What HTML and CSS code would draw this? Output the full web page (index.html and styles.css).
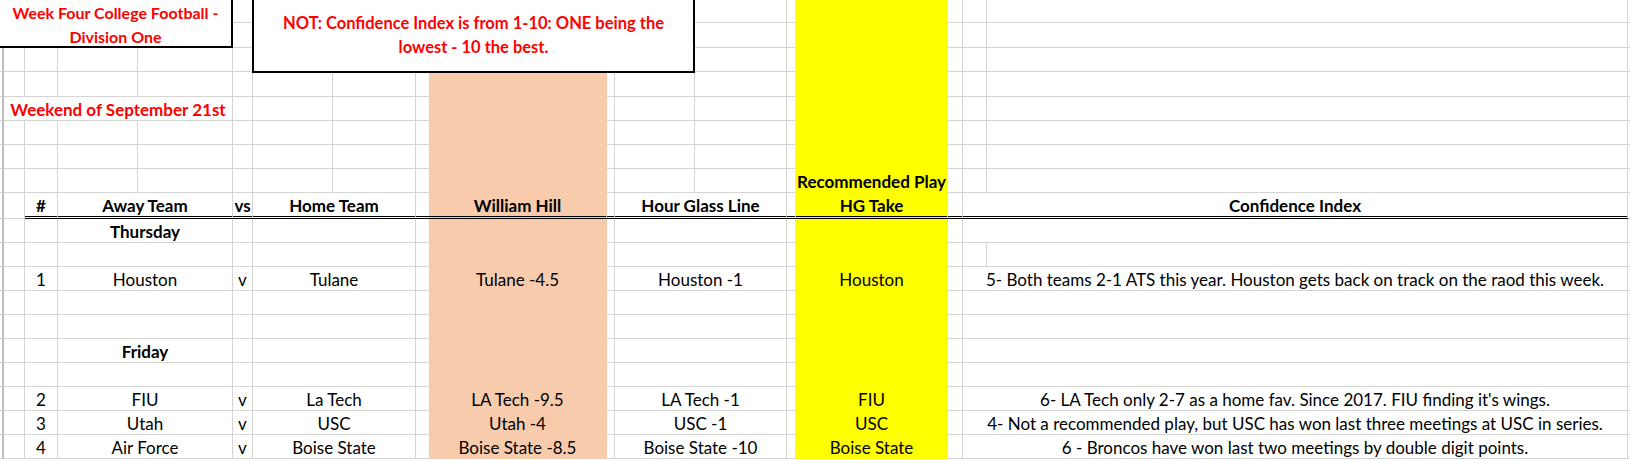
FILE: index.html
```html
<!DOCTYPE html>
<html>
<head>
<meta charset="utf-8">
<link rel="stylesheet" href="styles.css">
</head>
<body>
<div class="sheet">
  <div class="row h23"><div class="c st"></div><div class="c"></div><div class="c"></div><div class="c"></div><div class="c"></div><div class="c"></div><div class="c"></div><div class="c"></div><div class="c nr"></div><div class="c pe"></div><div class="c"></div><div class="c"></div><div class="c"></div><div class="c my"></div><div class="c ye"></div><div class="c"></div><div class="c"></div><div class="c"></div><div class="c nr"></div></div>
  <div class="row h25"><div class="c st"></div><div class="c"></div><div class="c"></div><div class="c"></div><div class="c"></div><div class="c"></div><div class="c"></div><div class="c"></div><div class="c nr"></div><div class="c pe"></div><div class="c"></div><div class="c"></div><div class="c"></div><div class="c my"></div><div class="c ye"></div><div class="c"></div><div class="c"></div><div class="c"></div><div class="c nr"></div></div>
  <div class="row h24"><div class="c st"></div><div class="c"></div><div class="c"></div><div class="c"></div><div class="c"></div><div class="c"></div><div class="c"></div><div class="c"></div><div class="c nr"></div><div class="c pe"></div><div class="c"></div><div class="c"></div><div class="c"></div><div class="c my"></div><div class="c ye"></div><div class="c"></div><div class="c"></div><div class="c"></div><div class="c nr"></div></div>
  <div class="row h25"><div class="c st"></div><div class="c"></div><div class="c"></div><div class="c"></div><div class="c"></div><div class="c"></div><div class="c"></div><div class="c"></div><div class="c nr"></div><div class="c pe"></div><div class="c"></div><div class="c"></div><div class="c"></div><div class="c my"></div><div class="c ye"></div><div class="c"></div><div class="c"></div><div class="c"></div><div class="c nr"></div></div>
  <div class="row h24"><div class="c st"></div><div class="c s4 b red">Weekend of September 21st</div><div class="c"></div><div class="c"></div><div class="c"></div><div class="c nr"></div><div class="c pe"></div><div class="c"></div><div class="c"></div><div class="c"></div><div class="c my"></div><div class="c ye"></div><div class="c"></div><div class="c"></div><div class="c"></div><div class="c nr"></div></div>
  <div class="row h24"><div class="c st"></div><div class="c"></div><div class="c"></div><div class="c"></div><div class="c"></div><div class="c"></div><div class="c"></div><div class="c"></div><div class="c nr"></div><div class="c pe"></div><div class="c"></div><div class="c"></div><div class="c"></div><div class="c my"></div><div class="c ye"></div><div class="c"></div><div class="c"></div><div class="c"></div><div class="c nr"></div></div>
  <div class="row h24"><div class="c st"></div><div class="c"></div><div class="c"></div><div class="c"></div><div class="c"></div><div class="c"></div><div class="c"></div><div class="c"></div><div class="c nr"></div><div class="c pe"></div><div class="c"></div><div class="c"></div><div class="c"></div><div class="c my"></div><div class="c ye"></div><div class="c"></div><div class="c"></div><div class="c"></div><div class="c nr"></div></div>
  <div class="row h24"><div class="c st"></div><div class="c"></div><div class="c"></div><div class="c"></div><div class="c"></div><div class="c"></div><div class="c"></div><div class="c"></div><div class="c nr"></div><div class="c pe"></div><div class="c"></div><div class="c"></div><div class="c"></div><div class="c my"></div><div class="c ye b">Recommended Play</div><div class="c"></div><div class="c"></div><div class="c"></div><div class="c nr"></div></div>
  <div class="row h26 hdr"><div class="c st"></div><div class="c"></div><div class="c d b">#</div><div class="c d s2 b">Away Team</div><div class="c d b">vs</div><div class="c d s2 b">Home Team</div><div class="c d nr"></div><div class="c d pe b">William Hill</div><div class="c d"></div><div class="c d s2 b">Hour Glass Line</div><div class="c d my"></div><div class="c d ye b">HG Take</div><div class="c d"></div><div class="c d s2 b">Confidence Index</div><div class="c nr"></div></div>
  <div class="row h24"><div class="c st"></div><div class="c"></div><div class="c"></div><div class="c s2 b">Thursday</div><div class="c"></div><div class="c s2"></div><div class="c nr"></div><div class="c pe"></div><div class="c"></div><div class="c s2"></div><div class="c my"></div><div class="c ye"></div><div class="c"></div><div class="c s2"></div><div class="c nr"></div></div>
  <div class="row h24"><div class="c st"></div><div class="c"></div><div class="c"></div><div class="c s2"></div><div class="c"></div><div class="c s2"></div><div class="c nr"></div><div class="c pe"></div><div class="c"></div><div class="c s2"></div><div class="c my"></div><div class="c ye"></div><div class="c"></div><div class="c"></div><div class="c"></div><div class="c nr"></div></div>
  <div class="row h24"><div class="c st"></div><div class="c"></div><div class="c">1</div><div class="c s2">Houston</div><div class="c">v</div><div class="c s2">Tulane</div><div class="c nr"></div><div class="c pe">Tulane -4.5</div><div class="c"></div><div class="c s2">Houston -1</div><div class="c my"></div><div class="c ye">Houston</div><div class="c"></div><div class="c s2">5- Both teams 2-1 ATS this year. Houston gets back on track on the raod this week.</div><div class="c nr"></div></div>
  <div class="row h24"><div class="c st"></div><div class="c"></div><div class="c"></div><div class="c s2"></div><div class="c"></div><div class="c s2"></div><div class="c nr"></div><div class="c pe"></div><div class="c"></div><div class="c s2"></div><div class="c my"></div><div class="c ye"></div><div class="c"></div><div class="c s2"></div><div class="c nr"></div></div>
  <div class="row h24"><div class="c st"></div><div class="c"></div><div class="c"></div><div class="c s2"></div><div class="c"></div><div class="c s2"></div><div class="c nr"></div><div class="c pe"></div><div class="c"></div><div class="c s2"></div><div class="c my"></div><div class="c ye"></div><div class="c"></div><div class="c s2"></div><div class="c nr"></div></div>
  <div class="row h24"><div class="c st"></div><div class="c"></div><div class="c"></div><div class="c s2 b">Friday</div><div class="c"></div><div class="c s2"></div><div class="c nr"></div><div class="c pe"></div><div class="c"></div><div class="c s2"></div><div class="c my"></div><div class="c ye"></div><div class="c"></div><div class="c s2"></div><div class="c nr"></div></div>
  <div class="row h24"><div class="c st"></div><div class="c"></div><div class="c"></div><div class="c s2"></div><div class="c"></div><div class="c s2"></div><div class="c nr"></div><div class="c pe"></div><div class="c"></div><div class="c s2"></div><div class="c my"></div><div class="c ye"></div><div class="c"></div><div class="c s2"></div><div class="c nr"></div></div>
  <div class="row h24"><div class="c st"></div><div class="c"></div><div class="c">2</div><div class="c s2">FIU</div><div class="c">v</div><div class="c s2">La Tech</div><div class="c nr"></div><div class="c pe">LA Tech -9.5</div><div class="c"></div><div class="c s2">LA Tech -1</div><div class="c my"></div><div class="c ye">FIU</div><div class="c"></div><div class="c s2">6- LA Tech only 2-7 as a home fav. Since 2017. FIU finding it's wings.</div><div class="c nr"></div></div>
  <div class="row h24"><div class="c st"></div><div class="c"></div><div class="c">3</div><div class="c s2">Utah</div><div class="c">v</div><div class="c s2">USC</div><div class="c nr"></div><div class="c pe">Utah -4</div><div class="c"></div><div class="c s2">USC -1</div><div class="c my"></div><div class="c ye">USC</div><div class="c"></div><div class="c s2">4- Not a recommended play, but USC has won last three meetings at USC in series.</div><div class="c nr"></div></div>
  <div class="row h24"><div class="c st"></div><div class="c"></div><div class="c">4</div><div class="c s2">Air Force</div><div class="c">v</div><div class="c s2">Boise State</div><div class="c nr"></div><div class="c pe">Boise State -8.5</div><div class="c"></div><div class="c s2">Boise State -10</div><div class="c my"></div><div class="c ye">Boise State</div><div class="c"></div><div class="c s2">6 - Broncos have won last two meetings by double digit points.</div><div class="c nr"></div></div>

  <div class="box box1">Week Four College Football -<br>Division One</div>
  <div class="box box2">NOT: Confidence Index is from 1-10: ONE being the<br>lowest - 10 the best.</div>
</div>
</body>
</html>
```

FILE: styles.css
```css
html, body {
  margin: 0;
  padding: 0;
  background: #ffffff;
}
body {
  font-family: Lato, "Liberation Sans", sans-serif;
  font-size: 17px;
  color: #000000;
}
.sheet {
  position: relative;
  width: 1630px;
  height: 460px;
  overflow: hidden;
}
.row {
  display: grid;
  grid-template-columns: 4px 21px 33px 80px 95px 20px 80px 83px 13px 178px 8px 80px 92px 9px 152px 15px 24px 641px 2px;
}
.h23 { height: 23px; }
.h24 { height: 24px; }
.h25 { height: 25px; }
.h26 { height: 26px; }
.c {
  box-sizing: border-box;
  border-right: 1px solid #d4d4d4;
  border-bottom: 1px solid #d4d4d4;
  display: flex;
  align-items: flex-end;
  justify-content: center;
  white-space: nowrap;
  line-height: 20px;
  min-width: 0;
}
.st { border-right: 2px solid #bdbdbd; }
.nr { border-right: none; }
.pe { background: #f8cbad; border-color: #f8cbad; }
.ye { background: #ffff00; border-color: #ffff00; }
.my { border-right-color: #ffff00; }
.s2 { grid-column: span 2; }
.s4 { grid-column: span 4; }
.b { font-weight: 700; }
.red { color: #ff0000; }
.hdr .d { border-bottom: 3px double #000000; }

.box {
  position: absolute;
  top: -3px;
  box-sizing: border-box;
  border: 2px solid #000000;
  background: #ffffff;
  color: #ff0000;
  font-weight: 700;
  text-align: center;
  line-height: 23.5px;
  white-space: nowrap;
}
.box1 {
  left: -2px;
  width: 235px;
  height: 51px;
  padding-top: 2px;
  font-size: 16px;
}
.box2 {
  left: 252px;
  width: 443px;
  height: 76px;
  padding-top: 13px;
  font-size: 16.5px;
}
```
